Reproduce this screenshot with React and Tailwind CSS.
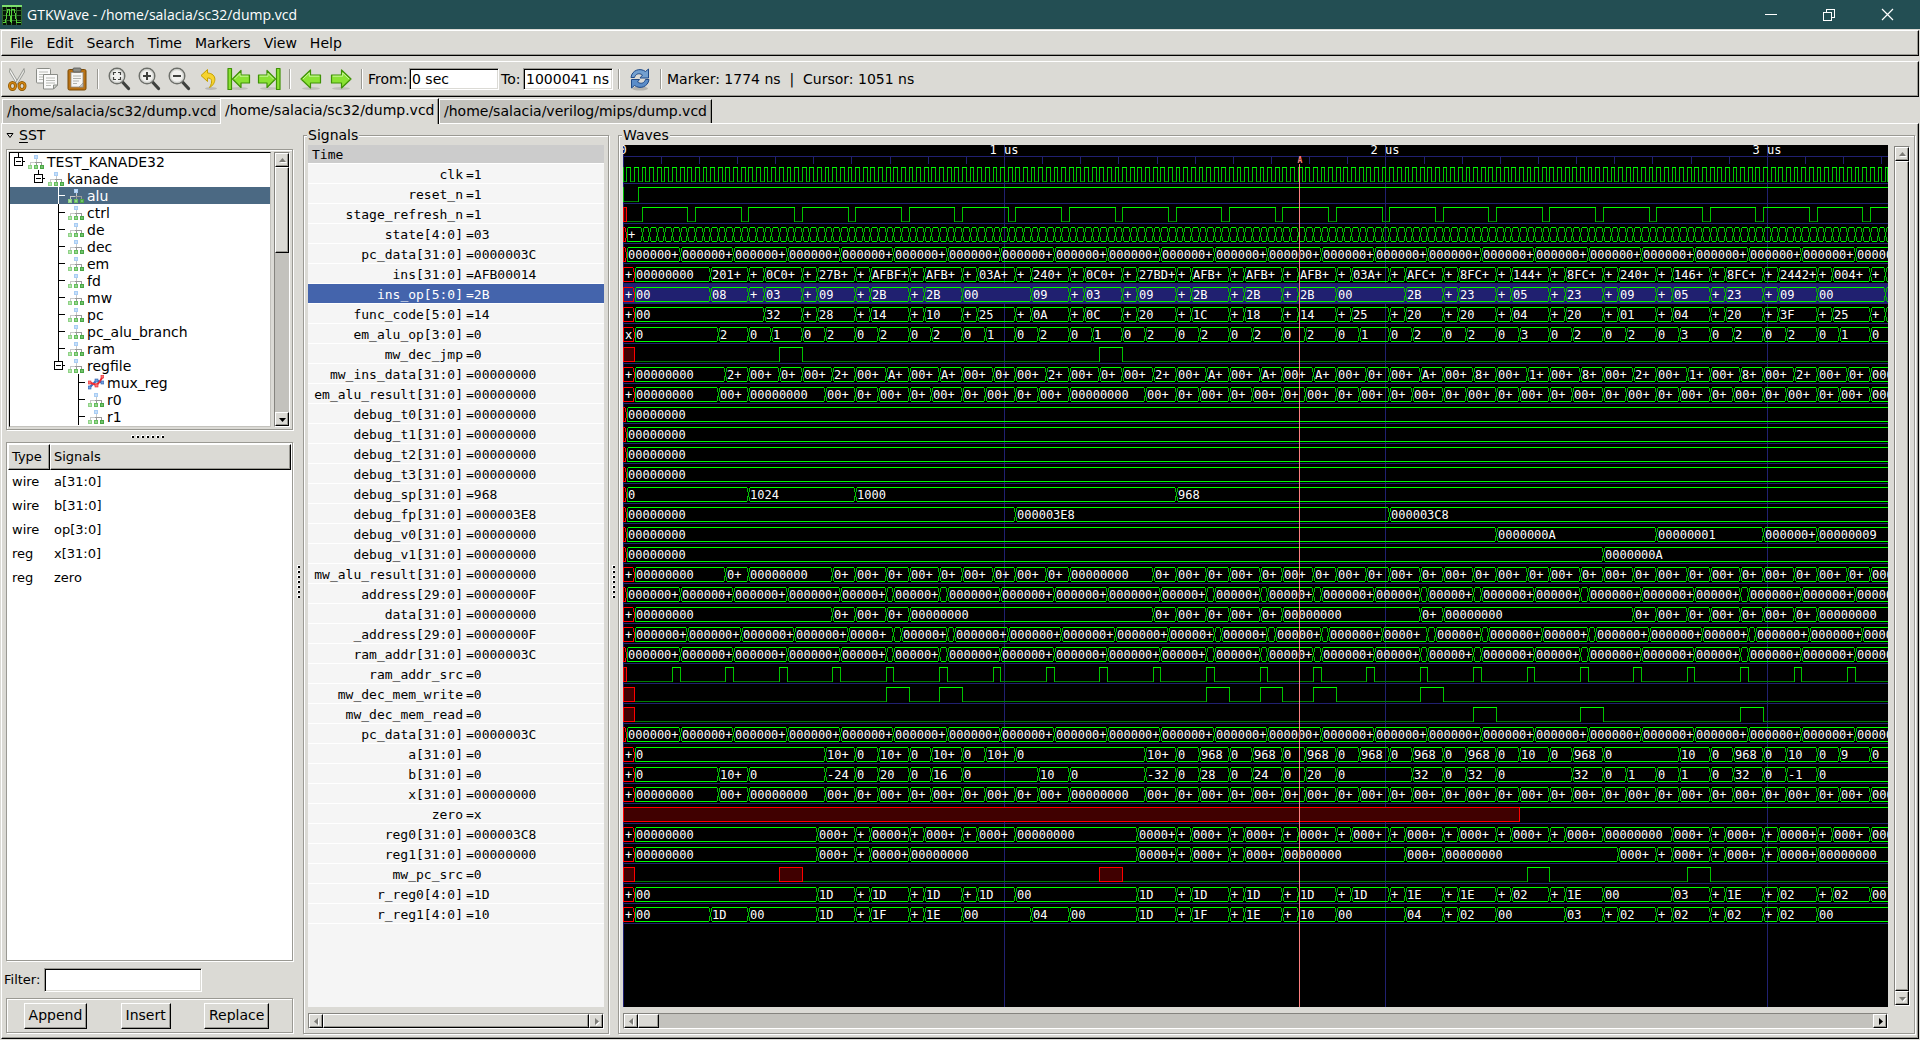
import React from "react";

/* ---------- signal data: event times are in units of 10 ns ---------- */

const PX = 3.8148;
const END = 1264;
const px = (t) => Math.min(Math.floor(t * PX), END);

const steps = (from, step, to = 332) => {
  const out = [];
  for (let t = from; t <= to; t += step) out.push(t);
  return out;
};
const pad = (s) => s.padEnd(8, "0");
const Z = "00000000";

// Vector events: [time, value]; "x" marks an undefined value.
const vec = (first, init, events) => ({
  kind: "vec",
  events: [[0, "x"], [first, init], ...events],
});
const zeros = (first, times) => vec(first, Z, times.map((t) => [t, Z]));
// Parses "23:08 33:00 ..." into events.
const ev = (text) =>
  text.split(" ").map((p) => {
    const [t, v] = p.split(":");
    return [Number(t), v];
  });
// Bit events: [time, 0 | 1 | "x"]
const bit = (events) => ({ kind: "bit", events });
const pulses = (first, list) => {
  const out = [[0, "x"], [first, 0]];
  list.forEach(([a, b, v = 1]) => out.push([a, v], [b, 0]));
  return bit(out);
};

const refresh = [[0, "x"], [1, 0], [5, 1]];
steps(17, 14).forEach((t) => refresh.push([t, 0], [t + 2, 1]));

const cycle = steps(61, 14);
const exTimes = [25, 33, 53].concat(
  cycle.flatMap((t) => [t, t + 6]).filter((t) => t !== 123 && t !== 131 && t < 332)
);
const mwTimes = [27, 33, 55].concat(
  cycle.flatMap((t) => [t, t + 8]).filter((t) => t !== 125 && t !== 131 && t < 332)
);
const pcTimes = steps(15, 14);
const split = [71, 85, 155, 169, 183, 211, 225, 253, 295];
const addrTimes = pcTimes.flatMap((t) => (split.includes(t) ? [t - 2, t] : [t]));

const insPairs = [
  [37, "0C00"], [51, "27B0"], [65, "AFBF"], [79, "AFBE"], [93, "03A0"], [107, "2400"],
  [121, "0C00"], [135, "27BD"], [149, "AFBF"], [163, "AFBE"], [177, "AFB0"], [191, "03A0"],
  [205, "AFC0"], [219, "8FC0"], [233, "1440"], [247, "8FC0"], [261, "2400"], [275, "1460"],
  [289, "8FC0"], [303, "2442"], [317, "0040"],
];
const ins = [[23, pad("201")], [33, Z]].concat(
  insPairs.flatMap(([t, v]) => [[t, pad(v)], [t + 10, Z]]), [[331, Z]]
);
const mwIns = [[27, pad("2")], [33, Z]].concat(
  insPairs.flatMap(([t, v]) => [[t + 4, pad(v)], [t + 10, Z]])
);

const SIGNALS = [
  ["clk", "1", bit(steps(0, 1).map((t) => [t, t % 2]))],
  ["reset_n", "1", bit([[0, 0], [4, 1]])],
  ["stage_refresh_n", "1", bit(refresh)],
  ["state[4:0]", "03", vec(1, "00", steps(5, 2).map((t) => [t, "00"]))],
  ["pc_data[31:0]", "0000003C", zeros(1, pcTimes)],
  ["ins[31:0]", "AFB00014", vec(3, Z, ins)],
  ["ins_op[5:0]", "2B", vec(3, "00", ev("23:08 33:00 37:03 47:00 51:09 61:00 65:2B 75:00 79:2B 89:00 107:09 117:00 121:03 131:00 135:09 145:00 149:2B 159:00 163:2B 173:00 177:2B 187:00 205:2B 215:00 219:23 229:00 233:05 243:00 247:23 257:00 261:09 271:00 275:05 285:00 289:23 299:00 303:09 313:00 331:00"))],
  ["func_code[5:0]", "14", vec(3, "00", ev("37:32 47:00 51:28 61:00 65:14 75:00 79:10 89:00 93:25 103:00 107:0A 117:00 121:0C 131:00 135:20 145:00 149:1C 159:00 163:18 173:00 177:14 187:00 191:25 201:00 205:20 215:00 219:20 229:00 233:04 243:00 247:20 257:00 261:01 271:00 275:04 285:00 289:20 299:00 303:3F 313:00 317:25 327:00 331:00"))],
  ["em_alu_op[3:0]", "0", vec(3, "0", ev("25:2 33:0 39:1 47:0 53:2 61:0 67:2 75:0 81:2 89:0 95:1 103:0 109:2 117:0 123:1 131:0 137:2 145:0 151:2 159:0 165:2 173:0 179:2 187:0 193:1 201:0 207:2 215:0 221:2 229:0 235:3 243:0 249:2 257:0 263:2 271:0 277:3 285:0 291:2 299:0 305:2 313:0 319:1 327:0"))],
  ["mw_dec_jmp", "0", pulses(3, [[41, 47], [125, 131]])],
  ["mw_ins_data[31:0]", Z, vec(3, Z, mwIns)],
  ["em_alu_result[31:0]", Z, zeros(3, exTimes)],
  ["debug_t0[31:0]", Z, zeros(1, [])],
  ["debug_t1[31:0]", Z, zeros(1, [])],
  ["debug_t2[31:0]", Z, zeros(1, [])],
  ["debug_t3[31:0]", Z, zeros(1, [])],
  ["debug_sp[31:0]", "968", vec(1, "0", ev("33:1024 61:1000 145:968"))],
  ["debug_fp[31:0]", "000003E8", vec(1, Z, ev("103:000003E8 201:000003C8"))],
  ["debug_v0[31:0]", Z, vec(1, Z, ev("229:0000000A 271:00000001 299:0000000A 313:00000009"))],
  ["debug_v1[31:0]", Z, vec(1, Z, ev("257:0000000A"))],
  ["mw_alu_result[31:0]", Z, zeros(3, mwTimes)],
  ["address[29:0]", "0000000F", zeros(1, addrTimes)],
  ["data[31:0]", Z, zeros(3, [55, 61, 69, 75, 139, 145, 153, 159, 167, 173, 209, 215, 265, 271, 279, 285, 293, 299, 307, 313])],
  ["_address[29:0]", "0000000F", zeros(3, addrTimes.map((t) => t + 2).filter((t) => t < 332))],
  ["ram_addr[31:0]", "0000003C", zeros(1, addrTimes)],
  ["ram_addr_src", "0", pulses(1, steps(13, 14).map((t) => [t, t + 2]))],
  ["mw_dec_mem_write", "0", pulses(3, [[69, 75], [83, 89], [153, 159], [167, 173], [181, 187], [209, 215]])],
  ["mw_dec_mem_read", "0", pulses(3, [[223, 229], [251, 257], [293, 299]])],
  ["pc_data[31:0]", "0000003C", zeros(1, pcTimes)],
  ["a[31:0]", "0", vec(3, "0", ev("53:1024 61:0 67:1000 75:0 81:1000 89:0 95:1000 103:0 137:1000 145:0 151:968 159:0 165:968 173:0 179:968 187:0 193:968 201:0 207:968 215:0 221:968 229:0 235:10 243:0 249:968 257:0 277:10 285:0 291:968 299:0 305:10 313:0 319:9 327:0"))],
  ["b[31:0]", "0", vec(3, "0", ev("25:1024 33:0 53:-24 61:0 67:20 75:0 81:16 89:0 109:10 117:0 137:-32 145:0 151:28 159:0 165:24 173:0 179:20 187:0 207:32 215:0 221:32 229:0 249:32 257:0 263:1 271:0 277:1 285:0 291:32 299:0 305:-1 313:0"))],
  ["x[31:0]", Z, zeros(3, exTimes)],
  ["zero", "x", bit([[0, "x"], [235, 1]])],
  ["reg0[31:0]", "000003C8", zeros(3, [51, 61, 65, 75, 79, 89, 93, 103, 135, 145, 149, 159, 163, 173, 177, 187, 191, 201, 205, 215, 219, 229, 233, 243, 247, 257, 275, 285, 289, 299, 303, 313, 317, 327])],
  ["reg1[31:0]", Z, zeros(3, [51, 61, 65, 75, 135, 145, 149, 159, 163, 173, 205, 215, 261, 271, 275, 285, 289, 299, 303, 313])],
  ["mw_pc_src", "0", pulses(3, [[41, 47, "x"], [125, 131, "x"], [237, 243], [279, 285]])],
  ["r_reg0[4:0]", "1D", vec(3, "00", ev("51:1D 61:00 65:1D 75:00 79:1D 89:00 93:1D 103:00 135:1D 145:00 149:1D 159:00 163:1D 173:00 177:1D 187:00 191:1D 201:00 205:1E 215:00 219:1E 229:00 233:02 243:00 247:1E 257:00 275:03 285:00 289:1E 299:00 303:02 313:00 317:02 327:00"))],
  ["r_reg1[4:0]", "10", vec(3, "00", ev("23:1D 33:00 51:1D 61:00 65:1F 75:00 79:1E 89:00 107:04 117:00 135:1D 145:00 149:1F 159:00 163:1E 173:00 177:10 187:00 205:04 215:00 219:02 229:00 247:03 257:00 261:02 271:00 275:02 285:00 289:02 299:00 303:02 313:00"))],
];
const SELECTED = 6;

/* ---------- wave drawing ---------- */

const h = (x1, x2, y) => (x2 > x1 ? `M${x1} ${y + 0.5}H${x2}` : "");
const v = (x, y1, y2) => `M${x + 0.5} ${y1}V${y2 + 1}`;

function BitRow({ events, y0 }) {
  const y1 = y0 + 14;
  const p = { hi: "", lo: "", edge: "" };
  const boxes = [];
  events.forEach(([t, val], i) => {
    const a = px(t);
    const b = i + 1 < events.length ? px(events[i + 1][0]) : END + 1;
    if (b <= a) return;
    if (val === "x") {
      boxes.push([a, b - a]);
      return;
    }
    if (i === 0 || events[i - 1][1] !== "x") p.edge += v(a, y0, y1);
    if (val) p.hi += h(a, b + 1, y0);
    else p.lo += h(a, b, y1);
  });
  return (
    <g fill="none" strokeWidth="1">
      <path d={p.lo} stroke="#008000" />
      <path d={p.edge} stroke="#00c000" />
      <path d={p.hi} stroke="#00ff00" />
      {boxes.map(([x, w]) => (
        <rect key={x} x={x + 0.5} y={y0 + 0.5} width={w} height="14" fill="#400000" stroke="#ff0000" />
      ))}
    </g>
  );
}

function VecRow({ events, y0 }) {
  const y1 = y0 + 14;
  const d = { x: "", line: "", edge: "" };
  const labels = [];
  const wide = events.some(([, val]) => val.length > 1);
  events.forEach(([t, val], i) => {
    const last = i + 1 >= events.length;
    const a = px(t);
    const b = last ? END + 3 : px(events[i + 1][0]);
    const seg = h(a + 2, b - 1, y0) + h(a + 2, b - 1, y1);
    if (val === "x") {
      d.x += h(a + 1, b - 1, y0) + h(a + 1, b - 1, y1) + v(a, y0, y1);
      d.x += `M${b - 1} ${y0 + 1}l1 4v6l-1 4`;
      d.edge += `M${b + 2} ${y0 + 1}l-1 4v6l1 4`;
    } else {
      d.line += seg;
      if (!last) d.edge += `M${b - 1} ${y0 + 1}L${b + 2} ${y1}M${b + 2} ${y0 + 1}L${b - 1} ${y1}`;
    }
    const room = last ? 99 : Math.floor((b - a - 4) / 7);
    const full = val === "x" && room > 0 && wide ? "+" : val;
    // Past the right edge nothing of the label could be seen.
    const visible = a < END - 4;
    const text = full.length <= room ? full : room > 0 ? full.slice(0, room - 1) + "+" : "";
    if (text && visible) labels.push([a + 2, text]);
  });
  return (
    <g fill="none" strokeWidth="1">
      <path d={d.edge} stroke="#00c000" />
      <path d={d.line} stroke="#00ff00" />
      <path d={d.x} stroke="#ff0000" />
      <g fill="#ffffff">
        {labels.map(([x, s]) => (
          <text key={x} x={x} y={y0 + 12}>{s}</text>
        ))}
      </g>
    </g>
  );
}

function WaveCanvas() {
  return (
    <svg
      className="block h-full w-full bg-black font-['DejaVu_Sans_Mono',monospace] text-[12px]"
      shapeRendering="crispEdges"
      role="img"
      aria-label="Waves"
    >
      <rect x="0" y="138" width="100%" height="20" fill="#202070" />
      {SIGNALS.map((_, i) => (
        <rect key={i} x="0" y={38 + i * 20} width="100%" height="1" fill="#202070" />
      ))}
      <rect x="0" y="11" width="100%" height="1" fill="#202070" />
      {steps(0, 10).map((t) => (
        <rect key={t} x={px(t)} y="12" width="1" height="7" fill="#202070" />
      ))}
      {[0, 100, 200, 300].map((t) => (
        <rect key={t} x={px(t)} y="0" width="1" height="100%" fill="#202070" />
      ))}
      <g fill="#ffffff" textAnchor="middle">
        {["0", "1 us", "2 us", "3 us"].map((s, i) => (
          <text key={s} x={px(i * 100)} y="9">{s}</text>
        ))}
      </g>
      {SIGNALS.map(([name, , wave], i) =>
        wave.kind === "bit" ? (
          <BitRow key={name + i} events={wave.events} y0={22 + i * 20} />
        ) : (
          <VecRow key={name + i} events={wave.events} y0={22 + i * 20} />
        )
      )}
      <rect x={px(177.4)} y="19" width="1" height="100%" fill="#ff8080" />
      <text x={px(177.4) + 1} y="18" fill="#ff8080" textAnchor="middle" className="text-[8px] font-bold">A</text>
    </svg>
  );
}

/* ---------- widgets ---------- */

const RAISED = "border border-t-white border-l-white border-b-black border-r-black shadow-[inset_-1px_-1px_0_#9a9993]";
const SUNKEN = "border border-t-[#9a9993] border-l-[#9a9993] border-b-white border-r-white shadow-[inset_1px_1px_0_#000,inset_-1px_-1px_0_#dbdad5]";
const ETCHED = "border border-[#9a9993] shadow-[inset_1px_1px_0_#fff,1px_1px_0_#fff]";
const TROUGH = "border border-t-[#85847f] border-l-[#85847f] border-b-white border-r-white bg-[#c3c2bd]";

const ARROWS = {
  up: "M1 6L4.500 2L8 6Z",
  down: "M1 3L4.500 7L8 3Z",
  left: "M6 1L2 4.500L6 8Z",
  right: "M3 1L7 4.500L3 8Z",
};

function ArrowButton({ dir, off }) {
  return (
    <button type="button" aria-label={`Scroll ${dir}`} className={`flex size-[14px] shrink-0 items-center justify-center bg-[#dbdad5] ${RAISED}`}>
      <svg width="9" height="9">
        {off && <path d={ARROWS[dir]} fill="#fff" transform="translate(1 1)" />}
        <path d={ARROWS[dir]} fill={off ? "#7c7b76" : "#000"} />
      </svg>
    </button>
  );
}

function VScroll({ thumb, upOff, downOff, className = "" }) {
  return (
    <div className={`flex w-[16px] shrink-0 flex-col ${TROUGH} ${className}`}>
      <ArrowButton dir="up" off={upOff} />
      <div className={`bg-[#dbdad5] ${RAISED} ${thumb}`} />
      <div className="mt-auto" />
      <ArrowButton dir="down" off={downOff} />
    </div>
  );
}

function HScroll({ thumb, leftOff, rightOff }) {
  return (
    <div className={`flex h-[16px] shrink-0 ${TROUGH}`}>
      <ArrowButton dir="left" off={leftOff} />
      <div className={`bg-[#dbdad5] ${RAISED} ${thumb}`} />
      <div className="ml-auto" />
      <ArrowButton dir="right" off={rightOff} />
    </div>
  );
}

function Grip({ className }) {
  return (
    <div className={`flex shrink-0 items-center justify-center gap-[2px] ${className}`}>
      {[0, 1, 2, 3, 4, 5, 6].map((i) => (
        <span key={i} className="size-[3px] bg-white">
          <span className="mt-px ml-px block size-[2px] bg-black" />
        </span>
      ))}
    </div>
  );
}

function Frame({ title, className, children }) {
  return (
    <section className={`relative mt-[11px] mb-[4px] flex flex-col px-[4px] pt-[9px] pb-[4px] ${ETCHED} ${className}`}>
      <h2 className="absolute -top-[10px] left-[3px] bg-[#dbdad5] px-px leading-[18px]">{title}</h2>
      {children}
    </section>
  );
}

/* ---------- icons ---------- */

function AppIcon() {
  return (
    <svg width="20" height="20" viewBox="0 0 20 20" shapeRendering="crispEdges">
      <rect width="20" height="20" fill="#061206" />
      <path d="M0 5.500H20M0 10.500H20M0 15.500H20M4.500 0V20M9.500 0V20M14.500 0V20M19.500 0V20M0.500 0V20" stroke="#2f6a2a" />
      <path d="M0 .5H20" stroke="#7ddf6e" strokeWidth="2" />
      <path d="M1 17.500H3.500L5.500 4.500H7.500L8.500 17.500M9.500 17.500V4.500H12.500L14.500 17.500H19" fill="none" stroke="#56d33c" />
    </svg>
  );
}

const Svg = ({ children }) => (
  <svg width="24" height="24" viewBox="0 0 24 24">{children}</svg>
);

const CutIcon = () => (
  <Svg>
    <path d="M5 1.500L13.500 16L12 17.500L4.500 5Z" fill="#f4f4f2" stroke="#888a85" strokeWidth=".8" />
    <path d="M19 1.500L10.500 16L12 17.500L19.500 5Z" fill="#e4e4e0" stroke="#888a85" strokeWidth=".8" />
    <ellipse cx="7.500" cy="19" rx="3" ry="3.400" fill="none" stroke="#8f5902" strokeWidth="3" />
    <ellipse cx="7.500" cy="19" rx="3" ry="3.400" fill="none" stroke="#d58613" strokeWidth="1.400" />
    <ellipse cx="17" cy="19" rx="3" ry="3.400" fill="none" stroke="#8f5902" strokeWidth="3" />
    <ellipse cx="17" cy="19" rx="3" ry="3.400" fill="none" stroke="#d58613" strokeWidth="1.400" />
  </Svg>
);

const CopyIcon = () => (
  <Svg>
    <rect x="1.500" y="1.500" width="14" height="14.500" rx="1" fill="#fafaf9" stroke="#8a8c87" />
    <path d="M4 5H13M4 7.500H13M4 10H9M4 12.500H9" stroke="#b9bbb6" />
    <path d="M8.500 7.500H22.500V18L18.500 22H8.500Z" fill="#fafaf9" stroke="#8a8c87" />
    <path d="M11 11H20M11 13.500H20M11 16H20M11 18.500H16" stroke="#b9bbb6" />
    <path d="M22.500 18H18.500V22Z" fill="#d3d7cf" stroke="#8a8c87" />
  </Svg>
);

const PasteIcon = () => (
  <Svg>
    <rect x="3" y="2.500" width="18" height="20.500" rx="1.500" fill="#b97215" stroke="#7a4a06" />
    <rect x="6" y="5.500" width="12" height="14.500" fill="#f6f6f4" stroke="#94928c" strokeWidth=".8" />
    <path d="M8 9H16M8 11.500H16M8 14H14M8 16.500H12" stroke="#b0b2ad" />
    <path d="M14 20L18 16V20Z" fill="#c9cbc6" stroke="#8a8c87" strokeWidth=".6" />
    <rect x="8" y="1" width="8" height="4" rx="1" fill="#8c8e89" stroke="#555753" strokeWidth=".8" />
  </Svg>
);

const ZoomIcon = ({ kind }) => (
  <Svg>
    <path d="M15.500 15L21.500 21.500" stroke="#3f413e" strokeWidth="3.200" strokeLinecap="round" />
    <circle cx="10" cy="9" r="7.800" fill="#f1f1ef" stroke="#6d6f6a" strokeWidth="1.400" />
    <circle cx="10" cy="9" r="6.400" fill="none" stroke="#c7c9c4" />
    {kind === "fit" && <path d="M6.500 8V5.500H9M11 5.500H13.500V8M13.500 10V12.500H11M9 12.500H6.500V10" fill="none" stroke="#3f413e" strokeWidth="1.200" />}
    {kind !== "fit" && <path d="M6 9H14" stroke="#3f413e" strokeWidth="2" />}
    {kind === "in" && <path d="M10 5V13" stroke="#3f413e" strokeWidth="2" />}
  </Svg>
);

const UndoIcon = () => (
  <Svg>
    <ellipse cx="14" cy="21.500" rx="6" ry="1.500" fill="#000" opacity=".15" />
    <path d="M10.500 2.500L4 8.500L10.500 14.500V11C15 10.500 16 15 12.500 20.500C19.500 17 20.500 6.500 10.500 6Z" fill="#f6d32f" stroke="#c4a000" strokeLinejoin="round" />
  </Svg>
);

const GREEN = { fill: "#8ae234", stroke: "#3f9206", strokeWidth: 1.2, strokeLinejoin: "round" };
const shape = "M2 12L11.500 3V8H21.500V16H11.500V21Z";
const ArrowIcon = ({ right, bar }) => (
  <Svg>
    <g transform={right ? "translate(24 0) scale(-1 1)" : undefined}>
      <ellipse cx="12" cy="21.500" rx="9" ry="1.500" fill="#000" opacity=".12" />
      {bar ? (
        <>
          <rect x="1" y="1.500" width="3.500" height="21" {...GREEN} />
          <path d="M5.500 12L14 3.500V8H22.500V16H14V20.500Z" {...GREEN} />
          <path d="M7.500 12L13 6.500V9.200H21.300" fill="none" stroke="#c9f59b" />
        </>
      ) : (
        <>
          <path d={shape} {...GREEN} />
          <path d="M4 12L10.300 6V9.200H20.300" fill="none" stroke="#c9f59b" />
        </>
      )}
    </g>
  </Svg>
);

const ReloadIcon = () => (
  <Svg>
    <ellipse cx="12" cy="21.500" rx="8" ry="2" fill="#000" opacity=".18" />
    <g fill="#729fcf" stroke="#204a87" strokeLinejoin="round">
      <path d="M3 10.500C4 3 12 .5 17.500 4.500L20.500 2V11H12L14.500 8C11 5.500 7.500 7 6.500 10.500Z" />
      <path d="M21 12.500C20 20 12 22.500 6.500 18.500L3.500 21V12.500H11.500L9.500 15C13 17.500 16.500 16 17.500 12.500Z" fill="#5a8cc8" />
    </g>
  </Svg>
);

const ModuleIcon = () => (
  <svg width="16" height="16" viewBox="0 0 16 16" shapeRendering="crispEdges" className="shrink-0">
    <path d="M8.500 5V8M2.500 11V8.500H7" fill="none" stroke="#c9c9c9" />
    <path d="M7 8.500H13.500V11M8.500 8V11" fill="none" stroke="#9a9a9a" />
    <rect x="6" y="1" width="4" height="4" fill="#a9cdf3" />
    <rect x="7" y="2" width="2" height="2" fill="#c6defa" />
    <rect x="0" y="11" width="4" height="4" fill="#8fd286" />
    <rect x="1" y="12" width="2" height="2" fill="#b4e6ad" />
    <rect x="6" y="11" width="4" height="4" fill="#67bd5f" />
    <rect x="7" y="12" width="2" height="2" fill="#97d690" />
    <rect x="12" y="11" width="4" height="4" fill="#4aa645" />
    <rect x="13" y="12" width="2" height="2" fill="#74c26e" />
  </svg>
);

const GraphIcon = () => (
  <svg width="16" height="16" viewBox="0 0 16 16" className="shrink-0">
    <path d="M1.500 12.500L5.500 8.500L8.500 5.500L14 7.500" fill="none" stroke="#3f74c4" strokeWidth="2" />
    <path d="M1.500 7.500L8.500 10L11.500 7L14.500 2" fill="none" stroke="#ee2e35" strokeWidth="2" />
    {[[0, 11], [7, 4], [13, 6]].map(([x, y]) => (
      <rect key={x} x={x} y={y} width="3" height="3" fill="#6fa0e0" stroke="#2c5fae" strokeWidth=".6" />
    ))}
    {[[0, 6], [7, 9], [13, 0]].map(([x, y]) => (
      <rect key={x} x={x} y={y} width="3" height="3" fill="#f77" stroke="#e0222a" strokeWidth=".6" />
    ))}
  </svg>
);

const ToolButton = ({ label, children }) => (
  <button type="button" aria-label={label} title={label} className="flex size-[30px] shrink-0 items-center justify-center">
    {children}
  </button>
);
const Sep = () => <span className="mx-[5px] h-[20px] w-[2px] shrink-0 border-r border-l border-r-white border-l-[#9a9993]" />;

/* ---------- hierarchy tree ---------- */

const TREE = [
  { name: "TEST_KANADE32", depth: 0, open: true },
  { name: "kanade", depth: 1, open: true },
  { name: "alu", depth: 2, selected: true },
  ...["ctrl", "de", "dec", "em", "fd", "mw", "pc", "pc_alu_branch", "ram"].map((name) => ({ name, depth: 2 })),
  { name: "regfile", depth: 2, open: true },
  { name: "mux_reg", depth: 3, graph: true },
  { name: "r0", depth: 3 },
  { name: "r1", depth: 3 },
];
const INDENT = ["w-[18px]", "w-[38px]", "w-[58px]", "w-[78px]"];

function TreeRow({ name, depth, open, selected, graph }) {
  const x = 8 + depth * 20;
  return (
    <li className={`flex h-[17px] items-center ${selected ? "bg-[#4b6983] text-white" : ""}`}>
      <svg height="17" shapeRendering="crispEdges" className={`shrink-0 ${INDENT[depth]}`} fill="none" stroke="currentColor">
        {open ? (
          <>
            <path d={`M${x + 0.5} 0V4M${x - 2} 8.500H${x + 3}M${x + 4} 8.500H${x + 7}`} />
            <rect x={x - 3.5} y="4.500" width="8" height="8" />
          </>
        ) : (
          <path d={`M${x + 0.5} 0V17M${x} 8.500H${x + 7}`} />
        )}
      </svg>
      {graph ? <GraphIcon /> : <ModuleIcon />}
      <span className="ml-[3px] leading-[16px]">{name}</span>
    </li>
  );
}

/* ---------- page ---------- */

const FACTS = [
  ["wire", "a[31:0]"],
  ["wire", "b[31:0]"],
  ["wire", "op[3:0]"],
  ["reg", "x[31:0]"],
  ["reg", "zero"],
];

const INPUT = `bg-white pl-[2px] outline-none ${SUNKEN}`;
const TAB = "flex items-center whitespace-nowrap border-t border-l border-white pl-[4px]";

export default function App() {
  return (
    <div className="flex h-screen w-full flex-col overflow-hidden bg-[#dbdad5] font-['DejaVu_Sans',sans-serif] text-[14px] text-black">
      <header className="flex h-[29px] shrink-0 items-center bg-[#234e53] text-white">
        <div className="ml-[2px] mr-[5px]"><AppIcon /></div>
        <h1 className="flex-1 font-['Open_Sans','Noto_Sans',sans-serif] text-[14px] leading-[28px]">GTKWave - /home/salacia/sc32/dump.vcd</h1>
        <button type="button" aria-label="Minimize" className="flex h-full w-[58px] items-center justify-center">
          <svg width="12" height="12" shapeRendering="crispEdges"><path d="M0 5.500H12" stroke="#fff" /></svg>
        </button>
        <button type="button" aria-label="Restore" className="flex h-full w-[58px] items-center justify-center">
          <svg width="12" height="12" shapeRendering="crispEdges" fill="none" stroke="#fff"><path d="M.5 3.500H8.500V11.500H.5ZM3.500 3V.5H11.500V8.500H9" /></svg>
        </button>
        <button type="button" aria-label="Close" className="mr-[4px] flex h-full w-[58px] items-center justify-center">
          <svg width="13" height="13" fill="none" stroke="#fff" strokeWidth="1.200"><path d="M1 1L12 12M12 1L1 12" /></svg>
        </button>
      </header>

      <nav className={`mx-px mt-px flex h-[26px] shrink-0 items-center gap-px pl-[2px] ${RAISED}`}>
        {["File", "Edit", "Search", "Time", "Markers", "View", "Help"].map((m) => (
          <button key={m} type="button" className="px-[6px]">{m}</button>
        ))}
      </nav>

      <div className={`mx-px mt-[5px] flex h-[36px] shrink-0 items-center ${RAISED}`} role="toolbar">
        <ToolButton label="Cut"><CutIcon /></ToolButton>
        <ToolButton label="Copy"><CopyIcon /></ToolButton>
        <ToolButton label="Paste"><PasteIcon /></ToolButton>
        <Sep />
        <ToolButton label="Zoom Fit"><ZoomIcon kind="fit" /></ToolButton>
        <ToolButton label="Zoom In"><ZoomIcon kind="in" /></ToolButton>
        <ToolButton label="Zoom Out"><ZoomIcon kind="out" /></ToolButton>
        <ToolButton label="Zoom Undo"><UndoIcon /></ToolButton>
        <ToolButton label="Zoom to Start"><ArrowIcon bar /></ToolButton>
        <ToolButton label="Zoom to End"><ArrowIcon bar right /></ToolButton>
        <Sep />
        <ToolButton label="Find Previous Edge"><ArrowIcon /></ToolButton>
        <ToolButton label="Find Next Edge"><ArrowIcon right /></ToolButton>
        <Sep />
        <label htmlFor="from" className="w-[41px] shrink-0 whitespace-nowrap">From:</label>
        <input id="from" defaultValue="0 sec" className={`h-[22px] w-[90px] ${INPUT}`} />
        <label htmlFor="to" className="ml-[2px] w-[22px] shrink-0 whitespace-nowrap">To:</label>
        <input id="to" defaultValue="1000041 ns" className={`h-[22px] w-[90px] ${INPUT}`} />
        <Sep />
        <ToolButton label="Reload"><ReloadIcon /></ToolButton>
        <Sep />
        <p className="whitespace-pre">{"Marker: 1774 ns  |  Cursor: 1051 ns"}</p>
      </div>

      <div className="relative z-10 ml-[2px] flex h-[26px] shrink-0 items-end" role="tablist">
        <button type="button" role="tab" className={`h-[24px] w-[218px] bg-[#c3c2bd] ${TAB}`}>/home/salacia/sc32/dump.vcd</button>
        <button type="button" role="tab" aria-selected="true" className={`-mb-px h-[26px] w-[219px] border-r border-r-black bg-[#dbdad5] pb-[3px] shadow-[inset_-1px_0_0_#9a9993] ${TAB}`}>/home/salacia/sc32/dump.vcd</button>
        <button type="button" role="tab" className={`h-[24px] border-r border-r-black bg-[#c3c2bd] pr-[4px] shadow-[inset_-1px_0_0_#9a9993] ${TAB}`}>/home/salacia/verilog/mips/dump.vcd</button>
      </div>

      <main className={`mx-px mb-px flex min-h-0 flex-1 ${RAISED}`}>
        <aside className="flex w-[291px] shrink-0 flex-col pb-[5px]">
          <h2 className="flex h-[25px] shrink-0 items-start pl-[4px] leading-[22px]">
            <svg width="8" height="22" fill="none" stroke="#000"><path d="M1 9.500H7L4 13.500Z" /></svg>
            <span className="ml-[5px]"><span className="underline underline-offset-2">S</span>ST</span>
          </h2>
          <div className={`ml-[4px] flex h-[281px] shrink-0 p-[2px] ${ETCHED}`}>
            <ul className="mr-[3px] min-w-0 flex-1 overflow-hidden border-t border-l border-r border-b border-t-black border-l-black border-r-[#c3c2bd] border-b-[#c3c2bd] bg-white">
              {TREE.map((row) => <TreeRow key={row.name} {...row} />)}
            </ul>
            <VScroll upOff thumb="h-[86px]" />
          </div>
          <Grip className="h-[12px] w-full" />
          <div className={`ml-[4px] flex min-h-0 flex-1 flex-col bg-white p-px ${ETCHED}`}>
            <table className="w-full border-separate border-spacing-0 text-left text-[13px]">
              <thead>
                <tr className="h-[26px] bg-[#dbdad5]">
                  <th className={`w-[42px] px-[3px] font-normal ${RAISED}`}>Type</th>
                  <th className={`px-[3px] font-normal ${RAISED}`}>Signals</th>
                </tr>
              </thead>
              <tbody>
                {FACTS.map(([type, name]) => (
                  <tr key={name} className="h-[24px]">
                    <td className="px-[4px]">{type}</td>
                    <td className="px-[4px]">{name}</td>
                  </tr>
                ))}
              </tbody>
            </table>
          </div>
          <div className="mt-[7px] mb-[6px] flex items-center pl-[2px]">
            <label htmlFor="filter" className="w-[40px] text-[13px]">Filter:</label>
            <input id="filter" className={`h-[24px] w-[158px] ${INPUT}`} />
          </div>
          <div className={`ml-[4px] flex h-[35px] shrink-0 items-center justify-around pr-[6px] ${ETCHED}`}>
            {["Append", "Insert", "Replace"].map((b) => (
              <button key={b} type="button" className={`h-[26px] px-[4px] ${RAISED}`}>{b}</button>
            ))}
          </div>
        </aside>

        <Grip className="h-full w-[10px] flex-col" />

        <Frame title="Signals" className="w-[306px] shrink-0">
          <div className="mb-[6px] min-h-0 flex-1 overflow-hidden bg-[#f5f5f5]">
            <table className="w-full border-separate border-spacing-0 font-['DejaVu_Sans_Mono',monospace] text-[13px] leading-[17px]">
              <thead>
                <tr><th colSpan={2} className="h-[19px] border-b border-white bg-[#cccccc] p-0 pt-[2px] pl-[4px] text-left leading-[16px] font-normal">Time</th></tr>
              </thead>
              <tbody>
                {SIGNALS.map(([name, value], i) => (
                  <tr key={name + i} className={i === SELECTED ? "bg-[#4464ac] text-white" : ""}>
                    <td className="h-[20px] w-[158px] border-b border-white p-0 pt-[2px] pr-[3px] text-right">{name}</td>
                    <td className="h-[20px] border-b border-white p-0 pt-[2px]">={value}</td>
                  </tr>
                ))}
              </tbody>
            </table>
          </div>
          <HScroll leftOff rightOff thumb="flex-1" />
        </Frame>

        <Grip className="h-full w-[9px] flex-col" />

        <Frame title="Waves" className="mr-[3px] min-w-0 flex-1">
          <div className="flex min-h-0 flex-1">
            <div className="flex min-w-0 flex-1 flex-col">
              <div className="mb-[6px] min-h-0 flex-1 overflow-hidden bg-black"><WaveCanvas /></div>
              <HScroll leftOff thumb="w-[21px]" />
            </div>
            <VScroll upOff downOff thumb="flex-1" className="mt-px mb-[23px] ml-[6px]" />
          </div>
        </Frame>
      </main>
    </div>
  );
}
